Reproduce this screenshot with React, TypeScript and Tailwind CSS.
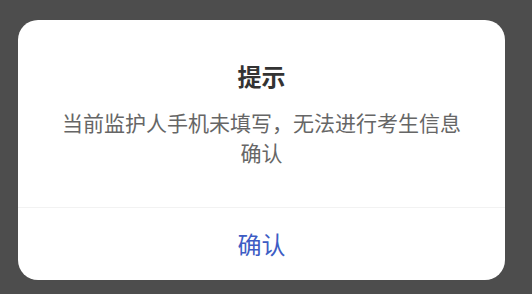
export default function App() {
  return (
    <div
      className="w-[532px] h-[294px] bg-[#4d4d4d] pt-5 pl-[18px] overflow-hidden"
      style={{ fontFamily: '"Noto Sans CJK SC", "Noto Sans", sans-serif' }}
    >
      <div className="w-[487px] h-[260px] bg-white rounded-[20px] flex flex-col overflow-hidden">
        <div className="flex flex-col items-center pt-10 px-[40px] pb-10 border-b border-[#f2f2f2]">
          <div className="text-[24px] leading-[32px] font-bold text-[#333]">提示</div>
          <div className="mt-[15px] text-[21px] leading-[30px] text-[#666] text-center">
            当前监护人手机未填写，无法进行考生信息确认
          </div>
        </div>
        <button className="flex-1 flex items-center justify-center text-[24px] text-[#3d5cc4]">
          确认
        </button>
      </div>
    </div>
  );
}
